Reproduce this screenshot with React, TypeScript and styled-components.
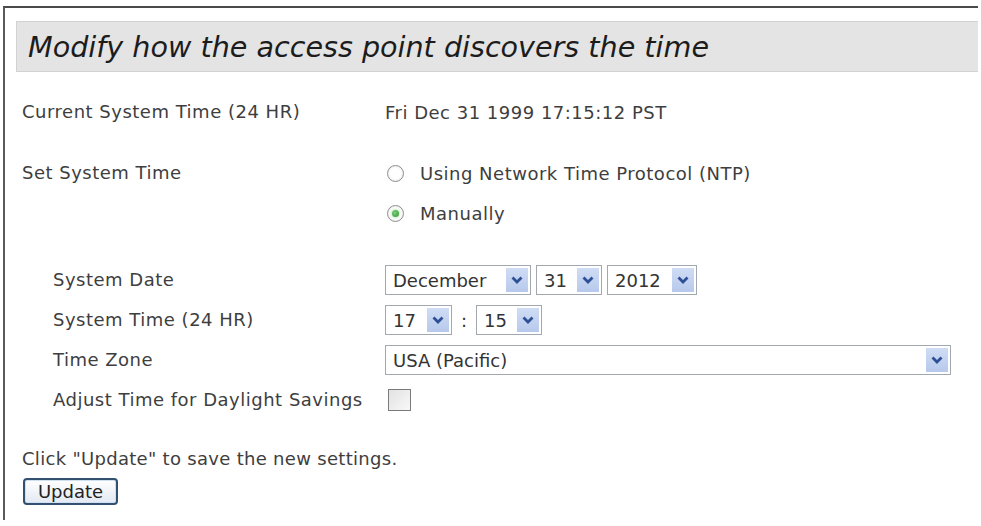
import React from 'react';
import styled, { createGlobalStyle } from 'styled-components';

const GlobalStyle = createGlobalStyle`
  html, body {
    margin: 0;
    padding: 0;
    background: #ffffff;
  }
  body {
    font-family: 'DejaVu Sans', Verdana, sans-serif;
    color: #3c3c3c;
  }
`;

const Frame = styled.div`
  margin: 6px 0 0 3px;
  width: 975px;
  height: 514px;
  border-top: 2px solid #4a4a4a;
  border-left: 2px solid #5a5a5a;
  box-sizing: border-box;
  overflow: hidden;
`;

const Header = styled.div`
  margin: 13px 0 0 11px;
  height: 51px;
  display: flex;
  align-items: center;
  padding-left: 11px;
  background: #e4e4e4;
  border: 1px solid #d2d2d2;
  border-right: none;
  box-sizing: border-box;
`;

const Title = styled.h1`
  margin: 0;
  font-size: 28.6px;
  font-weight: normal;
  font-style: italic;
  color: #1c1c1c;
  white-space: nowrap;
`;

const Form = styled.div`
  padding: 20px 0 0 17px;
  display: flex;
  flex-direction: column;
`;

const Row = styled.div<{ $indent?: boolean; $gap?: number }>`
  display: grid;
  grid-template-columns: ${(p) => (p.$indent ? '332px' : '363px')} 1fr;
  padding-left: ${(p) => (p.$indent ? '31px' : '0')};
  margin-top: ${(p) => p.$gap ?? 0}px;
  height: 40px;
  align-items: center;
  font-size: 18px;
  letter-spacing: 0.5px;
  white-space: nowrap;
`;

const RadioRow = styled(Row)`
  height: 80px;
  align-items: start;
`;

const Label = styled.span`
  color: #3e3e3e;
  line-height: 40px;
`;

const Value = styled.span`
  color: #3e3e3e;
`;

const Options = styled.div`
  display: flex;
  flex-direction: column;
`;

const Option = styled.label`
  display: flex;
  align-items: center;
  height: 40px;
  gap: 16px;
  padding-left: 2px;
  color: #3e3e3e;
`;

const Radio = styled.span<{ $checked?: boolean }>`
  width: 15px;
  height: 15px;
  border-radius: 50%;
  border: 1.5px solid #8e8e8e;
  background: radial-gradient(circle, #ffffff 45%, #e4e4e4 100%);
  display: flex;
  align-items: center;
  justify-content: center;
  box-sizing: content-box;

  &::after {
    content: '';
    display: ${(p) => (p.$checked ? 'block' : 'none')};
    width: 7px;
    height: 7px;
    border-radius: 50%;
    background: radial-gradient(circle at 40% 40%, #7ed27a, #2f8f2f);
    box-shadow: 0 0 2px 1px #c9ecc5;
  }
`;

const Controls = styled.div<{ $tight?: boolean }>`
  display: flex;
  align-items: center;
  gap: ${(p) => (p.$tight ? 0 : 5)}px;
  letter-spacing: 0;
`;

const Select = styled.div<{ $width: number }>`
  width: ${(p) => p.$width}px;
  height: 30px;
  display: flex;
  align-items: center;
  justify-content: space-between;
  border: 1px solid #a2a8b0;
  box-sizing: border-box;
  background: #ffffff;
  padding: 2px 2px 2px 7px;
  font-size: 18px;
  color: #333333;
`;

const Arrow = styled.span`
  width: 22px;
  height: 24px;
  background: linear-gradient(#cfdcf4, #b7c9ec);
  display: flex;
  align-items: center;
  justify-content: center;
`;

const Colon = styled.span`
  width: 24px;
  text-align: center;
  font-size: 18px;
  color: #333333;
`;

const Checkbox = styled.span`
  width: 23px;
  height: 22px;
  margin-left: 3px;
  border: 1.5px solid #7a7a7a;
  box-sizing: border-box;
  background: linear-gradient(135deg, #e2e2e2, #f8f8f8);
`;

const Note = styled.div`
  margin-top: 29px;
  height: 20px;
  line-height: 20px;
  font-size: 18px;
  letter-spacing: 0.3px;
  color: #3e3e3e;
`;

const Button = styled.button`
  margin: 9px 0 0 1px;
  width: 95px;
  height: 27px;
  border: 2px solid #34506f;
  border-radius: 4px;
  background: linear-gradient(#ffffff, #e3e9f3);
  font-family: 'DejaVu Sans', Verdana, sans-serif;
  font-size: 18px;
  color: #222222;
  padding: 0;
  box-shadow: inset 0 0 0 1px #cfe0f5;
`;

function Chevron() {
  return (
    <svg width="14" height="10" viewBox="0 0 14 10">
      <polyline points="2.5,2.5 7,7 11.5,2.5" fill="none" stroke="#2d4f95" strokeWidth="2.8" />
    </svg>
  );
}

function Dropdown({ value, width }: { value: string; width: number }) {
  return (
    <Select $width={width}>
      <span>{value}</span>
      <Arrow>
        <Chevron />
      </Arrow>
    </Select>
  );
}

export default function App() {
  return (
    <>
      <GlobalStyle />
      <Frame>
        <Header>
          <Title>Modify how the access point discovers the time</Title>
        </Header>
        <Form>
          <Row>
            <Label>Current System Time (24 HR)</Label>
            <Value>Fri Dec 31 1999 17:15:12 PST</Value>
          </Row>
          <RadioRow $gap={21}>
            <Label>Set System Time</Label>
            <Options>
              <Option>
                <Radio />
                Using Network Time Protocol (NTP)
              </Option>
              <Option>
                <Radio $checked />
                Manually
              </Option>
            </Options>
          </RadioRow>
          <Row $indent $gap={27}>
            <Label>System Date</Label>
            <Controls>
              <Dropdown value="December" width={146} />
              <Dropdown value="31" width={66} />
              <Dropdown value="2012" width={90} />
            </Controls>
          </Row>
          <Row $indent>
            <Label>System Time (24 HR)</Label>
            <Controls $tight>
              <Dropdown value="17" width={67} />
              <Colon>:</Colon>
              <Dropdown value="15" width={66} />
            </Controls>
          </Row>
          <Row $indent>
            <Label>Time Zone</Label>
            <Controls>
              <Dropdown value="USA (Pacific)" width={566} />
            </Controls>
          </Row>
          <Row $indent>
            <Label>Adjust Time for Daylight Savings</Label>
            <Controls>
              <Checkbox />
            </Controls>
          </Row>
          <Note>Click "Update" to save the new settings.</Note>
          <div>
            <Button>Update</Button>
          </div>
        </Form>
      </Frame>
    </>
  );
}
